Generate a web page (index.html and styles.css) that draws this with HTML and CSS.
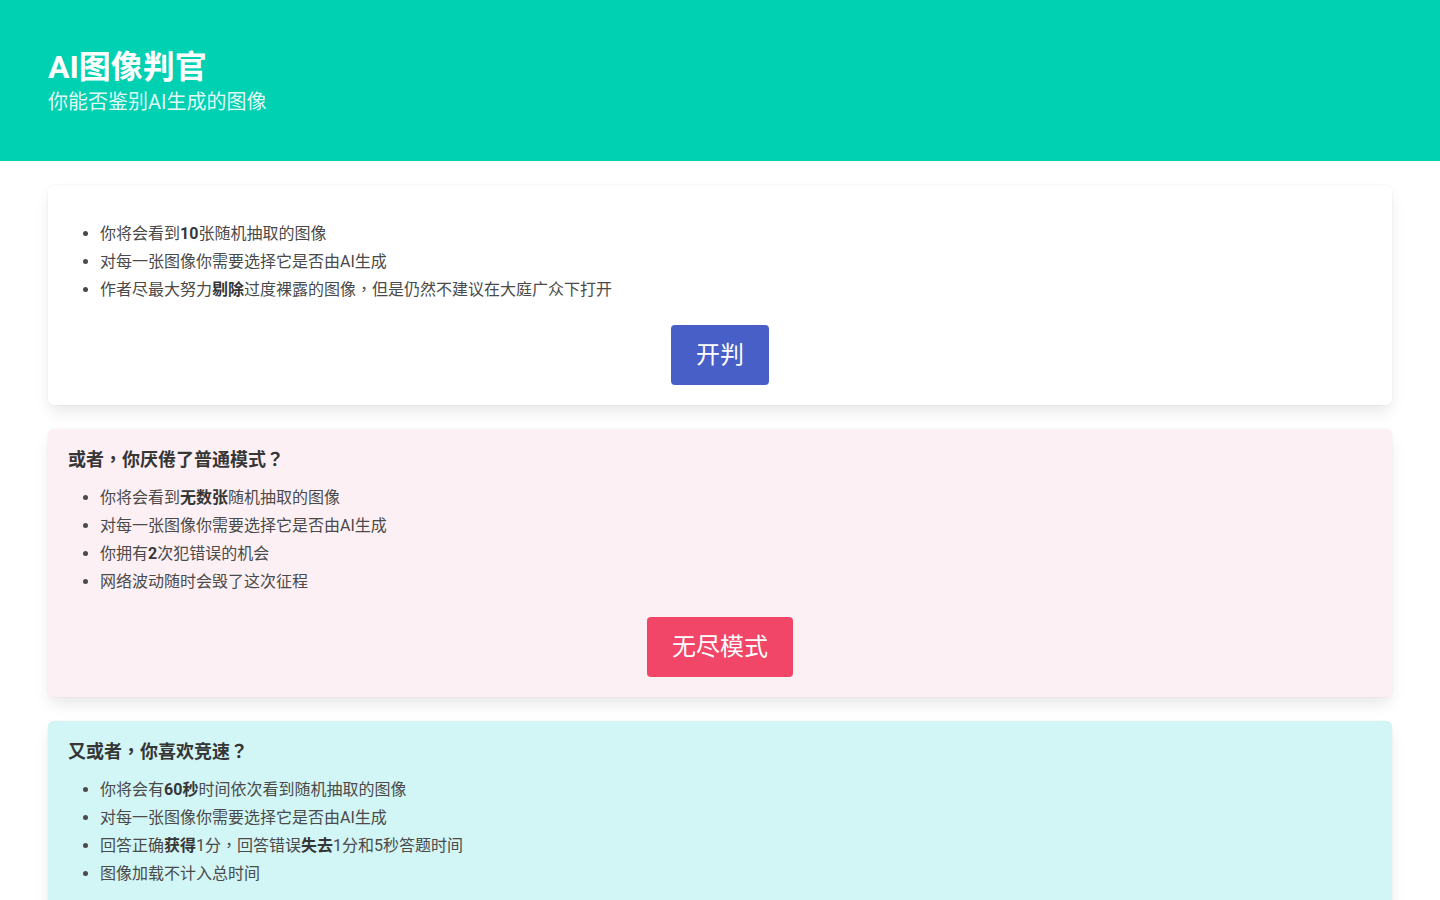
FILE: index.html
```html
<!DOCTYPE html>
<html lang="zh-CN">
<head>
<meta charset="utf-8">
<title>AI图像判官</title>
<link rel="stylesheet" href="styles.css">
</head>
<body>
<section class="hero">
  <div class="hero-body">
    <h1 class="title">AI图像判官</h1>
    <h2 class="subtitle">你能否鉴别AI生成的图像</h2>
  </div>
</section>
<main class="section">
  <div class="box">
    <ul class="rules">
      <li>你将会看到<strong>10</strong>张随机抽取的图像</li>
      <li>对每一张图像你需要选择它是否由AI生成</li>
      <li>作者尽最大努力<strong>剔除</strong>过度裸露的图像<span class="punc" lang="zh-Hant-TW">，</span>但是仍然不建议在大庭广众下打开</li>
    </ul>
    <div class="actions"><button class="button is-link">开判</button></div>
  </div>
  <div class="box is-pink">
    <h5 class="box-title">或者<span class="punc" lang="zh-Hant-TW">，</span>你厌倦了普通模式<span class="punc" lang="zh-Hant-TW">？</span></h5>
    <ul class="rules">
      <li>你将会看到<strong>无数张</strong>随机抽取的图像</li>
      <li>对每一张图像你需要选择它是否由AI生成</li>
      <li>你拥有<strong>2</strong>次犯错误的机会</li>
      <li>网络波动随时会毁了这次征程</li>
    </ul>
    <div class="actions"><button class="button is-danger">无尽模式</button></div>
  </div>
  <div class="box is-cyan">
    <h5 class="box-title">又或者<span class="punc" lang="zh-Hant-TW">，</span>你喜欢竞速<span class="punc" lang="zh-Hant-TW">？</span></h5>
    <ul class="rules">
      <li>你将会有<strong>60秒</strong>时间依次看到随机抽取的图像</li>
      <li>对每一张图像你需要选择它是否由AI生成</li>
      <li>回答正确<strong>获得</strong>1分<span class="punc" lang="zh-Hant-TW">，</span>回答错误<strong>失去</strong>1分和5秒答题时间</li>
      <li>图像加载不计入总时间</li>
    </ul>
    <div class="actions"><button class="button is-info">计时模式</button></div>
  </div>
</main>
</body>
</html>
```
FILE: styles.css
```css
* { box-sizing: border-box; }
html, body { margin: 0; padding: 0; }
body {
  font-family: Roboto, "Noto Sans CJK SC", "Noto Sans", sans-serif;
  font-size: 16px;
  line-height: 1.5;
  color: #4a4a4a;
  background: #fff;
}
.punc {
  font-family: "Noto Sans CJK TC", "Noto Sans CJK SC", sans-serif;
  line-height: 0;
}
.hero { background: #00d1b2; }
.hero-body { padding: 49px 48px 47px; }
.title {
  margin: 0;
  font-size: 32px;
  font-weight: 700;
  line-height: 36px;
  color: #fff;
  margin-bottom: 5px;
}
.subtitle {
  margin: 0;
  font-size: 20px;
  font-weight: 400;
  line-height: 24px;
  color: rgba(255,255,255,0.9);
}
.section { padding: 24px 48px; }
.box {
  background: #fff;
  border-radius: 6px;
  box-shadow: 0 0.5em 1em -0.125em rgba(10,10,10,0.1), 0 0 0 1px rgba(10,10,10,0.02);
  padding: 20px;
  margin-bottom: 24px;
}
.box.is-pink { background: #fdf0f4; }
.box.is-cyan { background: #d2f5f5; }
.box-title {
  margin: 0 0 16px;
  padding-top: 1px;
  font-size: 18px;
  line-height: 20px;
  font-weight: 700;
  color: #363636;
}
.rules {
  margin: 17px 0 15px 32px;
  padding: 0;
  list-style: disc;
}
.box-title + .rules { margin-top: 16px; }
.rules li { line-height: 24px; }
.rules li + li { margin-top: 4px; }
.rules strong { color: #363636; font-weight: 700; }
.actions {
  display: flex;
  justify-content: center;
  padding-top: 8px;
}
.button {
  font-family: Roboto, "Noto Sans CJK SC", sans-serif;
  font-size: 24px;
  height: 60px;
  line-height: 1.5;
  padding: 0 24px;
  border: 1px solid transparent;
  border-radius: 4px;
  color: #fff;
  cursor: pointer;
  display: inline-flex;
  align-items: center;
}
.button.is-link { background: #485fc7; }
.button.is-danger { background: #f14668; }
.button.is-info { background: #00d1b2; }
```
